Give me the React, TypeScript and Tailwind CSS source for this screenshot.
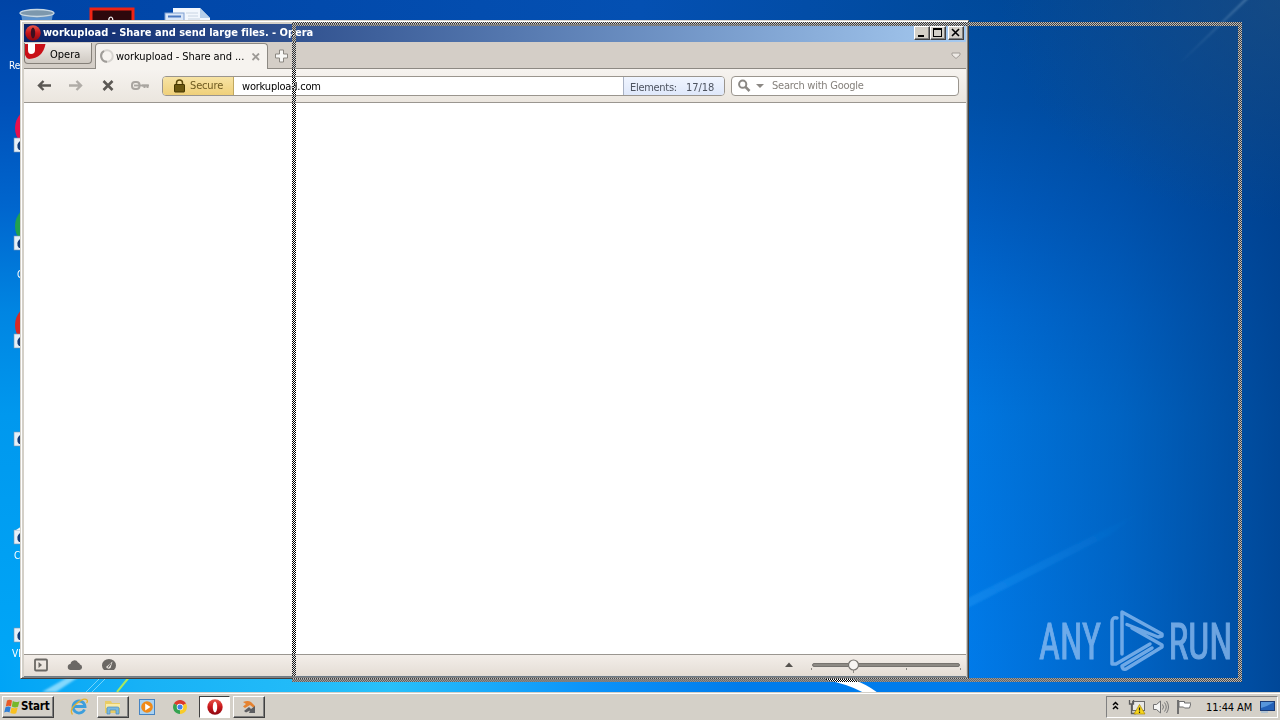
import type { ReactNode } from 'react';

const Wallpaper = () => (
  <svg className="absolute inset-0 size-full" viewBox="0 0 1280 692" preserveAspectRatio="none">
    <defs>
      <linearGradient id="left" x1="0" y1="0" x2="0" y2="1">
        <stop offset="0" stopColor="#0044a6" />
        <stop offset="0.15" stopColor="#0050b8" />
        <stop offset="0.3" stopColor="#0066ce" />
        <stop offset="0.45" stopColor="#0085e2" />
        <stop offset="0.6" stopColor="#0098ee" />
        <stop offset="1" stopColor="#00a8f8" />
      </linearGradient>
      <linearGradient id="right" x1="0" y1="0" x2="0" y2="1">
        <stop offset="0" stopColor="#004a9c" />
        <stop offset="0.15" stopColor="#0050a8" />
        <stop offset="0.3" stopColor="#005cc0" />
        <stop offset="0.45" stopColor="#006cd6" />
        <stop offset="0.6" stopColor="#0078e2" />
        <stop offset="1" stopColor="#007cec" />
      </linearGradient>
      <linearGradient id="shade" x1="0" y1="0" x2="1" y2="0">
        <stop offset="0" stopColor="#003c86" stopOpacity="0" />
        <stop offset="0.5" stopColor="#003c86" stopOpacity="0.35" />
        <stop offset="1" stopColor="#003c86" stopOpacity="0.82" />
      </linearGradient>
      <radialGradient id="haze" cx="1" cy="0" r="1">
        <stop offset="0" stopColor="#28547e" stopOpacity="0.5" />
        <stop offset="1" stopColor="#28547e" stopOpacity="0" />
      </radialGradient>
      <linearGradient id="top" x1="0" y1="0" x2="1" y2="0">
        <stop offset="0" stopColor="#0044a6" />
        <stop offset="0.5" stopColor="#0450b2" />
        <stop offset="0.76" stopColor="#004a9c" />
      </linearGradient>
      <linearGradient id="bottom" x1="0" y1="0" x2="1" y2="0">
        <stop offset="0" stopColor="#00a4f6" />
        <stop offset="0.15" stopColor="#18b2f6" />
        <stop offset="0.4" stopColor="#28c0fa" />
        <stop offset="0.6" stopColor="#0c94fa" />
        <stop offset="0.76" stopColor="#007cec" />
      </linearGradient>
      <linearGradient id="beam" x1="0" y1="1" x2="1" y2="0">
        <stop offset="0" stopColor="#2aa0f8" stopOpacity="0.35" />
        <stop offset="1" stopColor="#2aa0f8" stopOpacity="0" />
      </linearGradient>
      <linearGradient id="ray" x1="0" y1="1" x2="1" y2="0">
        <stop offset="0" stopColor="#7fa8cc" stopOpacity="0" />
        <stop offset="1" stopColor="#7fa8cc" stopOpacity="0.5" />
      </linearGradient>
      <filter id="soft" x="-20%" y="-20%" width="140%" height="140%">
        <feGaussianBlur stdDeviation="1.2" />
      </filter>
    </defs>
    <rect width="1280" height="40" fill="url(#top)" />
    <rect width="60" height="692" fill="url(#left)" />
    <rect y="660" width="972" height="32" fill="url(#bottom)" />
    <rect x="960" width="320" height="692" fill="url(#right)" />
    <rect x="960" width="320" height="692" fill="url(#shade)" />
    <rect x="1000" width="280" height="220" fill="url(#haze)" />
    <path d="M1176 66 L1246 -2 L1249 -2 L1184 60 Z" fill="url(#ray)" filter="url(#soft)" />
    <path d="M960 602 L1140 512 L1110 535 L960 612 Z" fill="url(#beam)" filter="url(#soft)" />
    <path d="M42 692 L70 676 L80 676 L56 692 Z" fill="#b8ecff" opacity="0.7" filter="url(#soft)" />
    <path d="M86 692 L100 678 M92 692 L106 678" stroke="#9ce4fc" strokeWidth="1" opacity="0.7" />
    <path d="M117 692 L130 676" stroke="#a8e860" strokeWidth="2" />
    <path d="M826 678 L850 678 Q868 685 878 693 L864 693 Q848 684 826 680 Z" fill="#fff" />
  </svg>
);

const OperaLogo = ({ className }: { className: string }) => (
  <svg className={className} viewBox="0 0 16 16">
    <defs>
      <linearGradient id="opera" x1="0" y1="0" x2="0" y2="1">
        <stop offset="0" stopColor="#e8564a" />
        <stop offset="0.5" stopColor="#c8161a" />
        <stop offset="1" stopColor="#8c0810" />
      </linearGradient>
    </defs>
    <ellipse cx="8" cy="8" rx="7.700" ry="7.800" fill="url(#opera)" />
    <ellipse cx="8" cy="8" rx="2.200" ry="5.400" fill="currentColor" />
  </svg>
);

const DESKTOP_SHORTCUTS = [
  { top: 138, color: '#e8104c', y: 128 },
  { top: 236, color: '#22a04c', y: 226 },
  { top: 334, color: '#d82a24', y: 325 },
  { top: 432, color: '', y: 0 },
  { top: 530, color: '', y: 0 },
  { top: 628, color: '', y: 0 },
];

const DesktopIcons = () => (
  <svg
    className="absolute inset-0 font-['DejaVu_Sans_Condensed','DejaVu_Sans',sans-serif] text-[10px]"
    width="240"
    height="692"
    viewBox="0 0 240 692"
  >
    {/* recycle bin */}
    <path d="M21 14 L24 30 H50 L53 14 Z" fill="#5b92cf" />
    <ellipse cx="37" cy="13.500" rx="17" ry="4" fill="#7d98ad" />
    <ellipse cx="37" cy="13" rx="17" ry="3.500" fill="none" stroke="#c8d8e4" strokeWidth="1.300" />
    {/* pdf reader */}
    <rect x="91" y="9" width="42" height="30" fill="#2d080c" stroke="#f02414" strokeWidth="3" />
    <path d="M109 23 Q108 17 111 17 Q114 18 112 23" fill="none" stroke="#fff" strokeWidth="1.200" />
    {/* document */}
    <path d="M173 8 H200 L210 18 V30 H173 Z" fill="#f2f7fd" />
    <path d="M200 8 V18 H210 Z" fill="#b6cfe9" />
    <path d="M186 13 h12 M188 16 h10 M188 19 h12" stroke="#c8d4e2" />
    <rect x="165" y="13" width="19" height="14" fill="#d9e6f7" stroke="#7f9fd2" />
    <path d="M168 16.500 h13" stroke="#4a78c0" strokeWidth="2" />
    {DESKTOP_SHORTCUTS.map(({ top, color, y }) => (
      <g key={top}>
        {color && <ellipse cx="32" cy={y} rx="17" ry="19" fill={color} />}
        <rect x="14" y={top} width="12" height="14" fill="#e6f0f8" stroke="#7795b2" strokeWidth="0.600" />
        <path d={`M20 ${top + 3} q-5 4 -1 9 h5 v-9 Z`} fill="#123c78" />
      </g>
    ))}
    <path d="M16 530 L22 526 V530 Z" fill="#eef5fa" />
    <g fill="#fff">
      <text x="9" y="69">Recycle Bin</text>
      <text x="17" y="278">Google</text>
      <text x="14" y="559">CCleaner</text>
      <text x="12" y="657">VLC media</text>
    </g>
  </svg>
);

const Watermark = () => (
  <svg
    className="absolute top-[600px] left-[1030px] overflow-visible font-[Roboto,sans-serif]"
    width="220"
    height="80"
    viewBox="0 0 220 80"
  >
    <g fill="#93c0f2" stroke="#93c0f2" strokeWidth="1" fontSize="50.500" opacity="0.75">
      <text x="9" y="59" textLength="62" lengthAdjust="spacingAndGlyphs">ANY</text>
      <text x="138.500" y="59" textLength="64" lengthAdjust="spacingAndGlyphs">RUN</text>
    </g>
    <path
      d="M87 18 Q82 17 82 22 V64 H86 L120 44 M92 54 V12 L132 34 V36 L128 37 L97 24.500 M102 28 L132 45 V47 L96 69 Q92 70 92 66 L122 48"
      fill="none"
      stroke="#93c0f2"
      strokeWidth="3.500"
      strokeLinejoin="round"
      strokeLinecap="round"
      opacity="0.75"
    />
  </svg>
);

const CaptionButton = ({ children }: { children: ReactNode }) => (
  <div className="flex h-[14px] w-4 items-center justify-center border border-t-white border-r-[#404040] border-b-[#404040] border-l-white bg-[#d4d0c8] shadow-[inset_-1px_-1px_#808080]">
    <svg width="12" height="12" viewBox="0 0 12 12" fill="none" stroke="#000" shapeRendering="crispEdges">
      {children}
    </svg>
  </div>
);

const TitleBar = () => (
  <div className="flex h-[18px] items-center bg-linear-to-r from-[#0a246a] to-[#a6caf0] pr-0.5 pl-px">
    <OperaLogo className="size-4 text-[#3a1020]" />
    <span className="ml-[2px] flex-1 pt-px text-[11px] font-bold tracking-[-0.02px] whitespace-nowrap text-white">
      workupload - Share and send large files. - Opera
    </span>
    <CaptionButton>
      <path d="M2 9 h6" strokeWidth="2" />
    </CaptionButton>
    <CaptionButton>
      <path d="M1.500 2 V9.500 H9.500 V2" />
      <path d="M1 2 h9" strokeWidth="2" />
    </CaptionButton>
    <div className="w-0.5" />
    <CaptionButton>
      <path d="M2 2 L9 9 M9 2 L2 9" strokeWidth="1.600" shapeRendering="auto" />
    </CaptionButton>
  </div>
);

const TabBar = () => (
  <div className="flex h-[27px] shrink-0 border-b border-[#8d8983] bg-[#d4cec7]">
    <div className="mt-px flex h-[21px] w-[68px] overflow-hidden rounded-b-[4px] border border-t-0 border-[#858079] bg-linear-to-b from-[#f1eeea] to-[#cfc9c2]">
      <svg width="22" height="17" viewBox="0 0 22 17">
        <path d="M0 1 H20.500 Q18 15 4 16 Q1 15 0 12 Z" fill="#c91018" />
        <path d="M3 0 V7 Q3 11 6 11 Q10 11 10 7 V0 Z" fill="#fff" />
      </svg>
      <span className="ml-[3px] pt-px text-[11px] leading-[21px]">Opera</span>
    </div>
    <div className="mt-px ml-[3px] flex h-[26px] w-[173px] items-center rounded-t-[4px] border border-b-0 border-[#8d8983] bg-[#f6f3ef] pl-1">
      <svg width="16" height="16" viewBox="0 0 16 16" fill="none" strokeWidth="2">
        <circle cx="7" cy="7" r="5.800" stroke="#d6d3cf" />
        <path d="M7 12.800 A5.800 5.800 0 0 1 4 2" stroke="#9f9c98" />
      </svg>
      <span className="w-[129px] pt-[2px] text-[11px] tracking-[-0.07px] whitespace-nowrap">
        workupload - Share and ...
      </span>
      <svg className="ml-[7px]" width="8" height="8" viewBox="0 0 8 8">
        <path d="M0.500 0.500 L7 7 M7 0.500 L0.500 7" stroke="#9d9a96" strokeWidth="1.800" />
      </svg>
    </div>
    <svg className="mt-[7px] ml-[6px]" width="14" height="14" viewBox="0 0 14 14">
      <path
        d="M5.500 1 H9.500 V5 H13.500 V9 H9.500 V13 H5.500 V9 H1.500 V5 H5.500 Z"
        fill="#f8f7f5"
        stroke="#8b8781"
        strokeLinejoin="round"
      />
    </svg>
    <svg className="mt-[10px] mr-[5px] ml-auto" width="10" height="8" viewBox="0 0 10 8">
      <path d="M1 1 H9 V3 L5 6.500 L1 3 Z" fill="#eeeae5" stroke="#a29d97" />
    </svg>
  </div>
);

const NavigationIcons = () => (
  <svg className="shrink-0" width="138" height="20" viewBox="24 0 138 20" fill="none">
    <path d="M39 9.500 H51 M43.500 5 L39 9.500 L43.500 14" stroke="#5b5854" strokeWidth="2.400" />
    <path d="M69 9.500 H81 M76.500 5 L81 9.500 L76.500 14" stroke="#b0aca7" strokeWidth="2.400" />
    <path d="M103.500 5 L112.500 14 M112.500 5 L103.500 14" stroke="#5b5854" strokeWidth="2.600" />
    <rect x="132" y="6" width="7.500" height="7" rx="3" stroke="#a9a5a0" strokeWidth="2" />
    <path d="M134 9.500 H149" stroke="#a9a5a0" strokeWidth="1.800" />
    <path d="M142 9.500 H148.500 M144.500 10 V12 M147.500 10 V12" stroke="#a9a5a0" strokeWidth="2" />
  </svg>
);

const AddressBar = () => (
  <div className="flex h-[34px] shrink-0 items-center border-b border-[#9a9690] bg-linear-to-b from-[#f6f3ef] to-[#ebe6df] pr-[7px] text-[11px]">
    <NavigationIcons />
    <div className="flex h-5 w-[563px] shrink-0 overflow-hidden rounded-[4px] border border-[#9a958e] bg-white leading-5">
      <div className="flex w-[71px] items-center border-r border-[#c0a860] bg-linear-to-b from-[#f7e3a4] to-[#efd07a] pl-[11px] text-[#6d5a20]">
        <svg width="11" height="14" viewBox="0 0 11 14">
          <path d="M2.500 6 V4 a3 3 0 0 1 6 0 V6" fill="none" stroke="#5c4a0c" strokeWidth="1.500" />
          <rect x="0.500" y="5.500" width="10" height="7.500" rx="0.500" fill="#6a5710" stroke="#453700" />
        </svg>
        <span className="ml-[5px] pt-px tracking-[-0.15px]">Secure</span>
      </div>
      <span className="flex-1 pl-[8px] tracking-[-0.2px]">workupload.com</span>
      <div className="flex w-[101px] border-l border-[#a9b2c4] bg-linear-to-b from-[#f0f5ff] to-[#dfe8fa] pt-px pl-1.5 text-[#4e5460]">
        <span className="w-[56px] tracking-[-0.3px]">Elements:</span>
        <span className="tracking-[-0.05px]">17/18</span>
      </div>
    </div>
    <div className="ml-1.5 flex h-5 w-[228px] items-center rounded-[4px] border border-[#9a958e] bg-white pl-[6px] text-[#85817c]">
      <svg width="28" height="14" viewBox="0 0 28 14">
        <circle cx="4.700" cy="5.200" r="3.600" fill="none" stroke="#8b8884" strokeWidth="2" />
        <path d="M7.200 7.700 L11.500 12" stroke="#8b8884" strokeWidth="2.600" />
        <path d="M18 5 H26 L22 9 Z" fill="#8b8884" />
      </svg>
      <span className="ml-[6px] pt-[2px] tracking-[-0.25px]">Search with Google</span>
    </div>
  </div>
);

const StatusBar = () => (
  <div className="flex h-[23px] shrink-0 items-center justify-between border-t border-b border-t-[#9a9690] border-b-[#6e7c88] bg-linear-to-b from-[#f3eee9] to-[#e4ddd5]">
    <svg width="110" height="21" viewBox="24 0 110 21">
      <rect x="35" y="4.500" width="12" height="11" rx="1" fill="none" stroke="#6b6864" strokeWidth="1.800" />
      <path d="M38.500 7 L42 10 L38.500 13 Z" fill="#6b6864" />
      <path d="M71 15 a3 3 0 0 1 -0.500 -6 a4 4 0 0 1 7.500 -1.500 a3 3 0 0 1 2 2 a2.800 2.800 0 0 1 -0.500 5.500 Z" fill="#6b6865" />
      <path d="M104 15 a7 6.500 0 1 1 10 0 Z" fill="#6b6864" />
      <path d="M106 12 L112.500 6.500 L110.500 13 Q108 15 106 12 Z" fill="#eee9e3" />
      <path d="M108 12.500 L111 8.500" stroke="#6b6864" strokeWidth="1.200" />
    </svg>
    <svg width="186" height="21" viewBox="780 0 186 21">
      <path d="M785 12 L789 7.500 L793 12 Z" fill="#55524e" />
      <rect x="812.500" y="8.500" width="147" height="3" rx="1.500" fill="#8d8a84" stroke="#65625e" strokeWidth="0.800" />
      <path d="M811.500 13 v2 M853.500 15 v3 M906.500 13 v2 M960.500 13 v2" stroke="#8d8a84" />
      <circle cx="853.500" cy="10" r="5" fill="#f7f5f2" stroke="#77746f" strokeWidth="1.200" />
    </svg>
  </div>
);

const BrowserWindow = () => (
  <div className="absolute top-5 left-5 flex h-[659px] w-[949px] flex-col border border-t-[#d4d0c8] border-r-[#404040] border-b-[#404040] border-l-[#d4d0c8] bg-[#d4d0c8] pt-[3px] pr-[2px] pb-px pl-[3px] shadow-[inset_1px_1px_#fff,inset_-1px_-1px_#808080]">
    <TitleBar />
    <TabBar />
    <AddressBar />
    <div className="flex-1 bg-white" />
    <StatusBar />
  </div>
);

// each strip drops the colour below it, then inverts every second pixel
const FrameStrip = ({ className }: { className: string }) => (
  <>
    <div className={`absolute backdrop-grayscale ${className}`} />
    <div
      className={`absolute bg-[conic-gradient(#fff_25%,#000_0_50%,#fff_0_75%,#000_0)] bg-[length:2px_2px] mix-blend-difference ${className}`}
    />
  </>
);

const DragFrame = () => (
  <>
    <FrameStrip className="top-[22px] left-[292px] h-1 w-[950px]" />
    <FrameStrip className="top-[26px] left-[292px] h-[652px] w-1" />
    <FrameStrip className="top-[26px] left-[1238px] h-[652px] w-1" />
    <FrameStrip className="top-[678px] left-[292px] h-1 w-[950px]" />
  </>
);

const RAISED =
  'border border-t-white border-r-[#404040] border-b-[#404040] border-l-white bg-[#d4d0c8] shadow-[inset_-1px_-1px_#808080]';

const Taskbar = () => (
  <div className="flex h-7 items-center border-t border-[#d4d0c8] bg-[#d4d0c8] pr-0.5 pl-0.5 shadow-[inset_0_1px_#fff]">
    <div className={`mt-px flex h-[22px] w-[52px] items-center pl-px ${RAISED}`}>
      <svg width="16" height="16" viewBox="0 0 16 16">
        <path d="M3 1.500 Q5.500 0 8 1.500 L7 7.300 Q4.500 6 1.800 7.500 Z" fill="#e85a28" />
        <path d="M8.800 2 Q12 4 15.500 2.200 L14 7.800 Q11 9.500 7.800 7.600 Z" fill="#76b82c" />
        <path d="M1.500 8.300 Q4 7 6.700 8 L5.500 13.500 Q3 12 0.200 13.500 Z" fill="#2f7fd6" />
        <path d="M7.500 8.500 Q10.500 10 13.700 8.500 L12.200 14.300 Q9 15.500 6.300 14 Z" fill="#f8c020" />
      </svg>
      <span className="ml-px text-[11.500px] font-bold tracking-[-0.2px]">Start</span>
    </div>
    <svg className="mt-px ml-[16px]" width="18" height="18" viewBox="0 0 18 18" fill="none">
      <path d="M14.500 11.500 A6 6 0 1 1 15 8.500 H4" stroke="#3c9edc" strokeWidth="2.800" />
      <path d="M2.500 16.500 Q-1 12 6 6 Q14 -1 17 2 Q18 3.500 16.500 5" stroke="#e4b22c" strokeWidth="1.300" />
    </svg>
    <div className={`mt-px ml-[9px] flex h-[22px] w-8 items-center justify-center ${RAISED}`}>
      <svg width="18" height="17" viewBox="0 0 18 17">
        <path d="M1 2 H7 L8 4 H16 V14 H1 Z" fill="#e9cc66" />
        <path d="M2 5 H16 V9 H2 Z" fill="#f9eba8" />
        <path d="M3 15 V9 Q3 8 4.500 8 H13.500 Q15 8 15 9 V15 H12 V11 H6 V15 Z" fill="#79b9e2" stroke="#4a8cba" strokeWidth="0.700" />
      </svg>
    </div>
    <svg className="mt-px ml-[10px]" width="16" height="16" viewBox="0 0 16 16">
      <rect x="0.500" y="0.500" width="15" height="15" fill="#a9d2f2" stroke="#4684c2" />
      <circle cx="8" cy="8" r="5.800" fill="#f08a18" />
      <path d="M6.200 4.500 L11.500 8 L6.200 11.500 Z" fill="#fff" />
    </svg>
    <svg className="mt-px ml-[18px]" width="14" height="14" viewBox="0 0 16 16">
      <path d="M8 8 L1.100 4 A8 8 0 0 1 14.900 4 Z" fill="#dc3a2c" />
      <path d="M8 8 V16 A8 8 0 0 1 1.100 4 Z" fill="#34a350" />
      <path d="M8 8 L14.900 4 A8 8 0 0 1 8 16 Z" fill="#f8cc28" />
      <circle cx="8" cy="8" r="3.700" fill="#fff" />
      <circle cx="8" cy="8" r="2.900" fill="#3f82ea" />
    </svg>
    <div className="mt-px ml-[12px] flex h-[22px] w-[31px] items-center justify-center border border-t-[#404040] border-r-white border-b-white border-l-[#404040] bg-white">
      <OperaLogo className="size-4 text-white" />
    </div>
    <div className={`mt-px ml-[3px] flex h-[22px] w-8 items-center justify-center ${RAISED}`}>
      <svg width="16" height="16" viewBox="0 0 16 16">
        <path d="M2 3 Q7 1 10 3 L14 7 V10 L9 6 L4 9 L2 7.500 L5 5 Z" fill="#e58230" />
        <path d="M3 12 L8 8 L10 10 L14 7 V14 H8 L9 11.500 L5 13.500 Z" fill="#5c5d61" />
      </svg>
    </div>
    <div className="mt-px ml-auto flex h-[22px] w-[172px] items-center border border-t-[#808080] border-r-white border-b-white border-l-[#808080]">
      <svg width="84" height="20" viewBox="1107 0 84 20" fill="none">
        <path d="M1113 8 L1115.500 5.500 L1118 8 M1113 12 L1115.500 9.500 L1118 12" stroke="#000" strokeWidth="1.500" />
        <rect x="1132.500" y="4.500" width="12" height="9" fill="#e8e8e6" stroke="#6b6b6b" />
        <path d="M1129.500 3 V7 H1133.500 V3 M1131.500 7 V16.500 H1136" stroke="#5c5c5c" strokeWidth="1.300" />
        <path d="M1139.500 7.500 L1145 17 H1134 Z" fill="#f7d51a" stroke="#a88a08" strokeWidth="0.700" />
        <path d="M1139.500 10.500 V13.500 M1139.500 14.500 V16" stroke="#222" strokeWidth="1.200" />
        <path d="M1153.500 7.500 H1156.500 L1160.500 4 V16 L1156.500 12.500 H1153.500 Z" fill="#f5f5f3" stroke="#707070" />
        <path d="M1162.500 7.500 q2 2.500 0 5 M1164.500 5.500 q3.500 4.500 0 9 M1166.500 4 q4 6 0 12" stroke="#777" />
        <path d="M1178 3 V17" stroke="#666" strokeWidth="1.800" />
        <path d="M1179 4.500 H1184.500 V6 H1191 L1189.500 11 H1184.500 L1183.500 10 H1179 Z" fill="#fff" stroke="#6d6d6d" />
      </svg>
      <span className="ml-[15px] w-[47px] pt-0.5 text-[11px] tracking-[-0.1px] whitespace-nowrap">11:44 AM</span>
      <svg className="ml-[7px]" width="15" height="14" viewBox="0 0 15 14">
        <rect x="0.500" y="1.500" width="14" height="9" fill="#2361b8" stroke="#1c3b74" />
        <path d="M1 8 Q7 7 14 2 H1 Z" fill="#5795da" />
        <path d="M1 12 H8" stroke="#8bb4da" />
      </svg>
    </div>
  </div>
);

const App = () => (
  <div className="flex h-[720px] w-[1280px] flex-col overflow-hidden font-['DejaVu_Sans_Condensed','DejaVu_Sans',sans-serif] text-black [font-stretch:condensed]">
    <div className="relative isolate flex-1">
      <Wallpaper />
      <DesktopIcons />
      <Watermark />
      <BrowserWindow />
      <DragFrame />
    </div>
    <Taskbar />
  </div>
);

export default App;
